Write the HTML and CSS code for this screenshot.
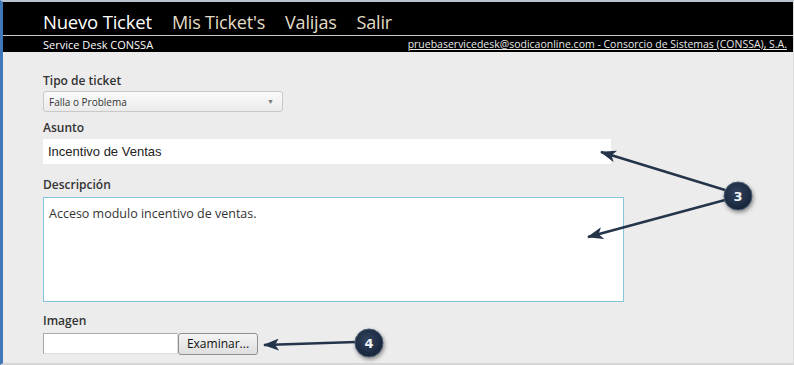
FILE: index.html
```html
<!DOCTYPE html>
<html lang="es">
  <head>
    <meta charset="UTF-8" />
    <meta name="viewport" content="width=device-width, initial-scale=1.0" />
    <title>Nuevo Ticket</title>
    <link rel="stylesheet" href="styles.css">
  </head>
  <body>
    <div class="page">
      <div class="topbar">
        <ul class="menu">
          <li><a href="#" class="current">Nuevo Ticket</a></li>
          <li><a href="#">Mis Ticket's</a></li>
          <li><a href="#">Valijas</a></li>
          <li><a href="#">Salir</a></li>
        </ul>
      </div>
      <div class="subbar">
        <span>Service Desk CONSSA</span>
        <a href="#">pruebaservicedesk@sodicaonline.com - Consorcio de Sistemas (CONSSA), S.A.</a>
      </div>

      <form class="ticket">
        <label>Tipo de ticket</label>
        <div class="select">
          <span>Falla o Problema</span>
          <span class="caret">&#9660;</span>
        </div>

        <label>Asunto</label>
        <div class="field subject">Incentivo de Ventas</div>

        <label>Descripción</label>
        <div class="field desc">Acceso modulo incentivo de ventas.</div>

        <label>Imagen</label>
        <div class="file">
          <span class="file-box"></span>
          <span class="file-btn">Examinar...</span>
        </div>
      </form>

      <!-- anotaciones sobre la captura -->
      <svg class="notes" width="794" height="365" viewBox="0 0 794 365">
        <defs>
          <marker id="head" viewBox="0 0 16 12" refX="15" refY="6" markerWidth="16" markerHeight="12" markerUnits="userSpaceOnUse" orient="auto">
            <path d="M16 6 L0 0 L4 6 L0 12 Z" fill="#24344a" />
          </marker>
          <radialGradient id="ball" cx="45%" cy="40%" r="60%">
            <stop offset="0" stop-color="#33445e" />
            <stop offset="1" stop-color="#16243a" />
          </radialGradient>
          <filter id="shadow" x="-50%" y="-50%" width="200%" height="200%">
            <feDropShadow dx="1" dy="2" stdDeviation="2" flood-color="#000" flood-opacity="0.45" />
          </filter>
        </defs>
        <line x1="725" y1="190" x2="601" y2="152" stroke="#24344a" stroke-width="2.5" marker-end="url(#head)" />
        <line x1="725" y1="200" x2="588" y2="237" stroke="#24344a" stroke-width="2.5" marker-end="url(#head)" />
        <line x1="356" y1="342" x2="264" y2="345" stroke="#24344a" stroke-width="2.5" marker-end="url(#head)" />
        <g filter="url(#shadow)">
          <circle cx="738" cy="196" r="14" fill="url(#ball)" stroke="#4a5a72" stroke-width="1" />
          <circle cx="369" cy="343" r="14" fill="url(#ball)" stroke="#4a5a72" stroke-width="1" />
        </g>
        <text x="738" y="201" class="num">3</text>
        <text x="369" y="348" class="num">4</text>
      </svg>
    </div>
  </body>
</html>
```

FILE: styles.css
```css
* {
  margin: 0;
  padding: 0;
  box-sizing: border-box;
}
body {
  background: #ececec;
  font-family: "Open Sans", "Noto Sans", sans-serif;
  color: #333;
}
a {
  text-decoration: none;
}
li {
  list-style: none;
}
.page {
  position: relative;
  height: 365px;
  overflow: hidden;
  border-top: 2px solid #b9c3cf;
  border-left: 3px solid #3f78b8;
  border-right: 1px solid #dcdcdc;
  border-bottom: 2px solid #d6d6d6;
}

/* barra superior */
.topbar {
  background: #000;
  height: 34px;
  border-bottom: 1px solid #c9c9c9;
  padding-left: 40px;
}
.menu {
  display: flex;
  column-gap: 20px;
  align-items: flex-end;
  height: 33px;
}
.menu a {
  display: block;
  font-size: 18px;
  line-height: 26px;
  color: #e3dcc6;
  letter-spacing: -0.2px;
}
.menu a.current {
  font-size: 18.5px;
  color: #fff;
}
.subbar {
  background: #000;
  height: 16px;
  display: flex;
  justify-content: space-between;
  align-items: center;
  padding: 0 6px 0 40px;
  font-size: 11px;
  color: #fff;
}
.subbar a {
  font-size: 10.5px;
  color: #e8e8e8;
  text-decoration: underline;
}

/* formulario */
.ticket {
  padding: 21px 0 0 40px;
  display: flex;
  flex-direction: column;
  align-items: flex-start;
}
.ticket label {
  font-size: 12px;
  font-weight: 600;
  line-height: 16px;
  color: #333;
}
.select {
  width: 240px;
  height: 21px;
  margin-top: 2px;
  margin-bottom: 8px;
  border: 1px solid #c9c9c9;
  border-radius: 3px;
  background: linear-gradient(#fafafa, #ebebeb);
  display: flex;
  justify-content: space-between;
  align-items: center;
  padding: 0 8px 0 5px;
  font-size: 10px;
  color: #333;
}
.select .caret {
  font-size: 7px;
  color: #777;
}
.field {
  background: #fff;
}
.subject {
  width: 568px;
  height: 25px;
  margin-top: 3px;
  margin-bottom: 13px;
  padding: 3px 5px;
  font-family: "Liberation Sans", Arial, sans-serif;
  font-size: 13px;
  line-height: 19px;
  color: #222;
}
.desc {
  width: 581px;
  height: 105px;
  margin-top: 4px;
  margin-bottom: 11px;
  border: 1px solid #86c6dc;
  padding: 7px 5px;
  font-size: 12.5px;
  line-height: 18px;
  color: #333;
}
.file {
  display: flex;
  margin-top: 4px;
}
.file-box {
  width: 135px;
  height: 21px;
  background: #fff;
  border: 1px solid #a9a9a9;
  border-right-color: #ddd;
  border-bottom-color: #ddd;
}
.file-btn {
  width: 80px;
  height: 22px;
  border: 1px solid #8f8f8f;
  border-radius: 3px;
  background: linear-gradient(#f4f4f4, #dedede);
  font-size: 12px;
  line-height: 20px;
  text-align: center;
  color: #111;
}

/* anotaciones */
.notes {
  position: absolute;
  top: -2px;
  left: -3px;
  pointer-events: none;
}
.num {
  font-family: "DejaVu Sans", sans-serif;
  font-size: 13px;
  font-weight: bold;
  fill: #eef2f6;
  text-anchor: middle;
}
```
